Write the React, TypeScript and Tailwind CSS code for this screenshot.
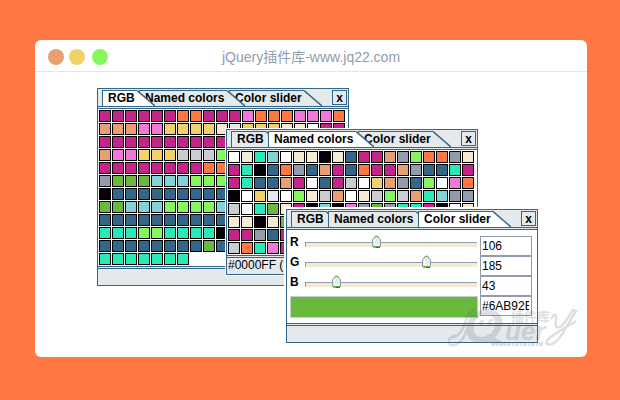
import { ReactNode, useState } from "react";

const TABS = [
  { label: "RGB", width: "w-[53px]" },
  { label: "Named colors", width: "w-[106px]" },
  { label: "Color slider", width: "w-[93px]" },
];

const SWATCHES: Record<string, string> = {
  M: "bg-[#c52489]",
  O: "bg-[#ff7742]",
  P: "bg-[#f078d8]",
  H: "bg-[#e8a073]",
  Y: "bg-[#efd36a]",
  C: "bg-[#f5ead3]",
  L: "bg-[#e4e9ec]",
  G: "bg-[#cacdcf]",
  S: "bg-[#929cad]",
  N: "bg-[#336688]",
  T: "bg-[#2ae9b8]",
  K: "bg-[#050008]",
  W: "bg-white",
  c: "bg-[#81d3d8]",
  g: "bg-[#69b93f]",
  l: "bg-[#85f75d]",
};

const RGB_ROWS = [
  "MMMMMMOOMMMPOOOPPPO",
  "HHHPPYYYYCLYYYCCWMM",
  "MMMMMMMMMMMMMMMMMMM",
  "HPPYYYGGGlllcccSSSS",
  "MMMMMMMMOOOOPPPOOOO",
  "SgggccclllllTTTcccc",
  "KNNNNNNNNNNNNNNNNNN",
  "ggcccllllcccTTTTSSS",
  "NNNNNNNNNNNNNNNNNNN",
  "TTTllTTTTKKNNNNNNNN",
  "NNNNNNNNgNNNNNNNNNN",
  "TTTTTTT",
];

const NAMED_ROWS = [
  "WCTcWCCKCNMMHSlOOSC",
  "MTKNOSNHMNOMMHSNNTM",
  "MTNNHMWNMGWYHSNlWPO",
  "KWYLWlCGHWCGlGHTcSS",
  "GWTgCMKcKPSgSTTMKWC",
  "CCKCgWHHMNTSOOCCMNS",
  "MMSNMTTWKKYHHCPPMNN",
  "GOTPMSSlCCTTNNMMWYY",
];

type PanelProps = {
  name: string;
  active: number;
  className: string;
  footer?: string;
  children: ReactNode;
};

function Panel({ name, active, className, footer, children }: PanelProps) {
  return (
    <section aria-label={name} className={`absolute w-[252px] border border-[#336688] bg-white ${className}`}>
      <header className="flex h-5 justify-between border-b-3 border-double border-[#336688] bg-[#e4e9ec] pt-px pr-px pl-1">
        <div role="tablist" className="flex">
          {TABS.map((tab, i) => {
            const fill = i === active ? "fill-white" : "fill-[#e4e9ec]";
            const body = i === active ? "bg-white" : "bg-[#e4e9ec]";
            const order = i === active ? "z-20" : Math.abs(i - active) === 1 ? "z-10" : "z-0";
            return (
              <button
                key={tab.label}
                type="button"
                role="tab"
                aria-selected={i === active}
                className={`relative -mr-4 flex h-4 ${tab.width} ${order}`}
              >
                <span className={`h-4 flex-1 border-t border-l border-[#336688] pl-[5px] text-left text-xs leading-[14px] font-bold whitespace-nowrap ${body}`}>
                  {tab.label}
                </span>
                <svg className="h-4 w-[18px] shrink-0" viewBox="0 0 18 16" aria-hidden="true">
                  <path d="M0 0.5L18 16H0Z" className={fill} />
                  <path d="M0 0.5L18 16" fill="none" stroke="#336688" strokeWidth="1.5" />
                </svg>
              </button>
            );
          })}
        </div>
        <button
          type="button"
          aria-label="Close"
          className="h-[15px] w-[15px] border border-[#336688] text-center text-xs leading-[12px] font-bold"
        >
          x
        </button>
      </header>
      {children}
      <footer className="h-[19px] border-t-3 border-double border-[#336688] bg-[#e4e9ec] pl-px text-xs leading-[14px]">
        {footer}
      </footer>
    </section>
  );
}

function ColorGrid({ rows }: { rows: string[] }) {
  return (
    <div className="flex flex-col gap-px p-px">
      {rows.map((row, y) => (
        <div key={y} className="flex gap-px">
          {row.split("").map((code, x) => (
            <button
              key={x}
              type="button"
              aria-label={`Color ${y + 1}-${x + 1}`}
              className={`h-3 w-3 border border-black ${SWATCHES[code]}`}
            />
          ))}
        </div>
      ))}
    </div>
  );
}

type ChannelProps = {
  label: string;
  value: number;
  onChange: (value: number) => void;
};

function ChannelSlider({ label, value, onChange }: ChannelProps) {
  const id = `channel-${label}`;
  return (
    <div className="flex h-5">
      <label htmlFor={id} className="w-[15px] text-xs leading-[13px] font-bold">
        {label}
      </label>
      <div className="relative mr-px h-[17px] flex-1">
        <input
          id={id}
          type="range"
          min={0}
          max={255}
          value={value}
          onChange={(e) => onChange(Number(e.target.value))}
          className="mt-1.5 block h-[5px] w-full appearance-none border-t border-l border-[#929cad] bg-[#f5ead3] [&::-webkit-slider-thumb]:h-3 [&::-webkit-slider-thumb]:w-[9px] [&::-webkit-slider-thumb]:appearance-none"
        />
        <svg
          className="pointer-events-none absolute -top-px h-[13px] w-[9px]"
          style={{ left: Math.floor((value / 255) * 162) }}
          viewBox="0 0 9 13"
          aria-hidden="true"
        >
          <path d="M0.5 4.5L3.5 1H5.5L8.5 4.5V11.5L7.5 12.5H1.5L0.5 11.5Z" fill="#e4e9ec" stroke="#929cad" />
          <path d="M2 3.5L3.5 1.5H5.5L7 3.5" fill="none" stroke="#69b93f" />
          <path d="M2 5H7V10H2Z" fill="#ffffff" />
          <path d="M3 5H7V9H3Z" fill="#e4e9ec" />
          <path d="M1 11.5H8" stroke="#69b93f" />
          <path d="M4 12.5H8" stroke="#336688" />
        </svg>
      </div>
    </div>
  );
}

function SliderBody() {
  const [rgb, setRgb] = useState([106, 185, 43]);
  const hex = "#" + rgb.map((n) => n.toString(16).padStart(2, "0").toUpperCase()).join("");
  const update = (i: number, value: number) => setRgb(rgb.map((n, j) => (j === i ? value || 0 : n)));
  const field =
    "block h-5 w-full border border-[#929cad] bg-white pr-0.5 pl-px text-xs outline-none";

  return (
    <div className="flex gap-0.5 px-[3px] pt-1.5 pb-[5px]">
      <div className="w-[188px]">
        {["R", "G", "B"].map((label, i) => (
          <ChannelSlider key={label} label={label} value={rgb[i]} onChange={(v) => update(i, v)} />
        ))}
        <div className="h-[22px] border border-[#cacdcf] bg-[#69b93f]" />
      </div>
      <div className="w-[52px]">
        {["R", "G", "B"].map((label, i) => (
          <input
            key={label}
            aria-label={`${label} value`}
            value={rgb[i]}
            onChange={(e) => update(i, Number(e.target.value))}
            className={field}
          />
        ))}
        <input aria-label="Hex value" value={hex} readOnly className={field} />
      </div>
    </div>
  );
}

function Watermark() {
  return (
    <svg
      className="pointer-events-none absolute top-[235px] left-[413px] h-[42px] w-[132px] opacity-20"
      viewBox="0 0 132 42"
      fill="#5b6770"
      aria-hidden="true"
    >
      <path d="M2 31C8 31 13 26 16 19L21 6L26 3L18 25C15 34 9 39 3 38C-1 37 0 31 7 28" fill="none" stroke="#5b6770" strokeWidth="2.5" />
      <path
        fillRule="evenodd"
        d="M38 2C50 2 56 9 54 18C52 28 43 36 33 36C22 36 17 29 19 20C21 10 29 2 38 2ZM37 8C31 8 27 12 26 19C25 26 28 30 34 30C41 30 46 25 47 18C48 11 44 8 37 8Z"
      />
      <path d="M40 27L60 38H47L35 31Z" />
      <path d="M36 14C31 13 31 19 35 18M45 13C40 12 40 18 44 17" fill="none" stroke="#5b6770" strokeWidth="2" />
      <text x="57" y="33" fontSize="26" fontWeight="bold" fontStyle="italic" fontFamily="Liberation Sans">
        uer
      </text>
      <text x="63" y="14" fontSize="13" fontWeight="bold" fontFamily="Noto Sans CJK SC, sans-serif">
        插件库
      </text>
      <path d="M103 12C106 6 109 7 108 13C106 22 111 23 117 15L125 3L128 4L117 22C111 34 104 39 99 37C96 34 103 29 128 14" fill="none" stroke="#5b6770" strokeWidth="2.5" />
      <path d="M43 37H95" stroke="#5b6770" strokeWidth="4" strokeDasharray="4 1 2 1" />
    </svg>
  );
}

export default function App() {
  return (
    <div className="flex min-h-screen bg-[#ff7742] pt-10 pr-[33px] pb-[43px] pl-[35px] font-['Liberation_Sans',Arial,sans-serif] text-black">
      <main className="flex flex-1 flex-col rounded-md bg-white">
        <div className="flex h-8 items-center border-b border-[#e5e5e5] px-[13px] pt-0.5">
          <div className="flex w-[60px] gap-[5px]">
            <span className="h-4 w-4 rounded-full bg-[#e8a073]" />
            <span className="h-4 w-4 rounded-full bg-[#efd36a]" />
            <span className="ml-0.5 h-4 w-4 rounded-full bg-[#85f75d]" />
          </div>
          <h1 className="flex-1 text-center font-['Liberation_Sans','Noto_Sans_CJK_SC',sans-serif] text-sm font-normal text-[#929cad]">
            jQuery插件库-www.jq22.com
          </h1>
          <div className="w-[60px]" />
        </div>
        <div className="relative flex-1">
          <Panel name="RGB" active={0} className="top-4 left-[62px]">
            <ColorGrid rows={RGB_ROWS} />
          </Panel>
          <Panel
            name="Named colors"
            active={1}
            footer="#0000FF ("
            className="top-[57px] left-[191px] shadow-[0_0_0_1px_#ffffff]"
          >
            <ColorGrid rows={NAMED_ROWS} />
          </Panel>
          <Panel name="Color slider" active={2} className="top-[137px] left-[251px] shadow-[0_0_0_2px_#ffffff]">
            <SliderBody />
          </Panel>
          <Watermark />
        </div>
      </main>
    </div>
  );
}
